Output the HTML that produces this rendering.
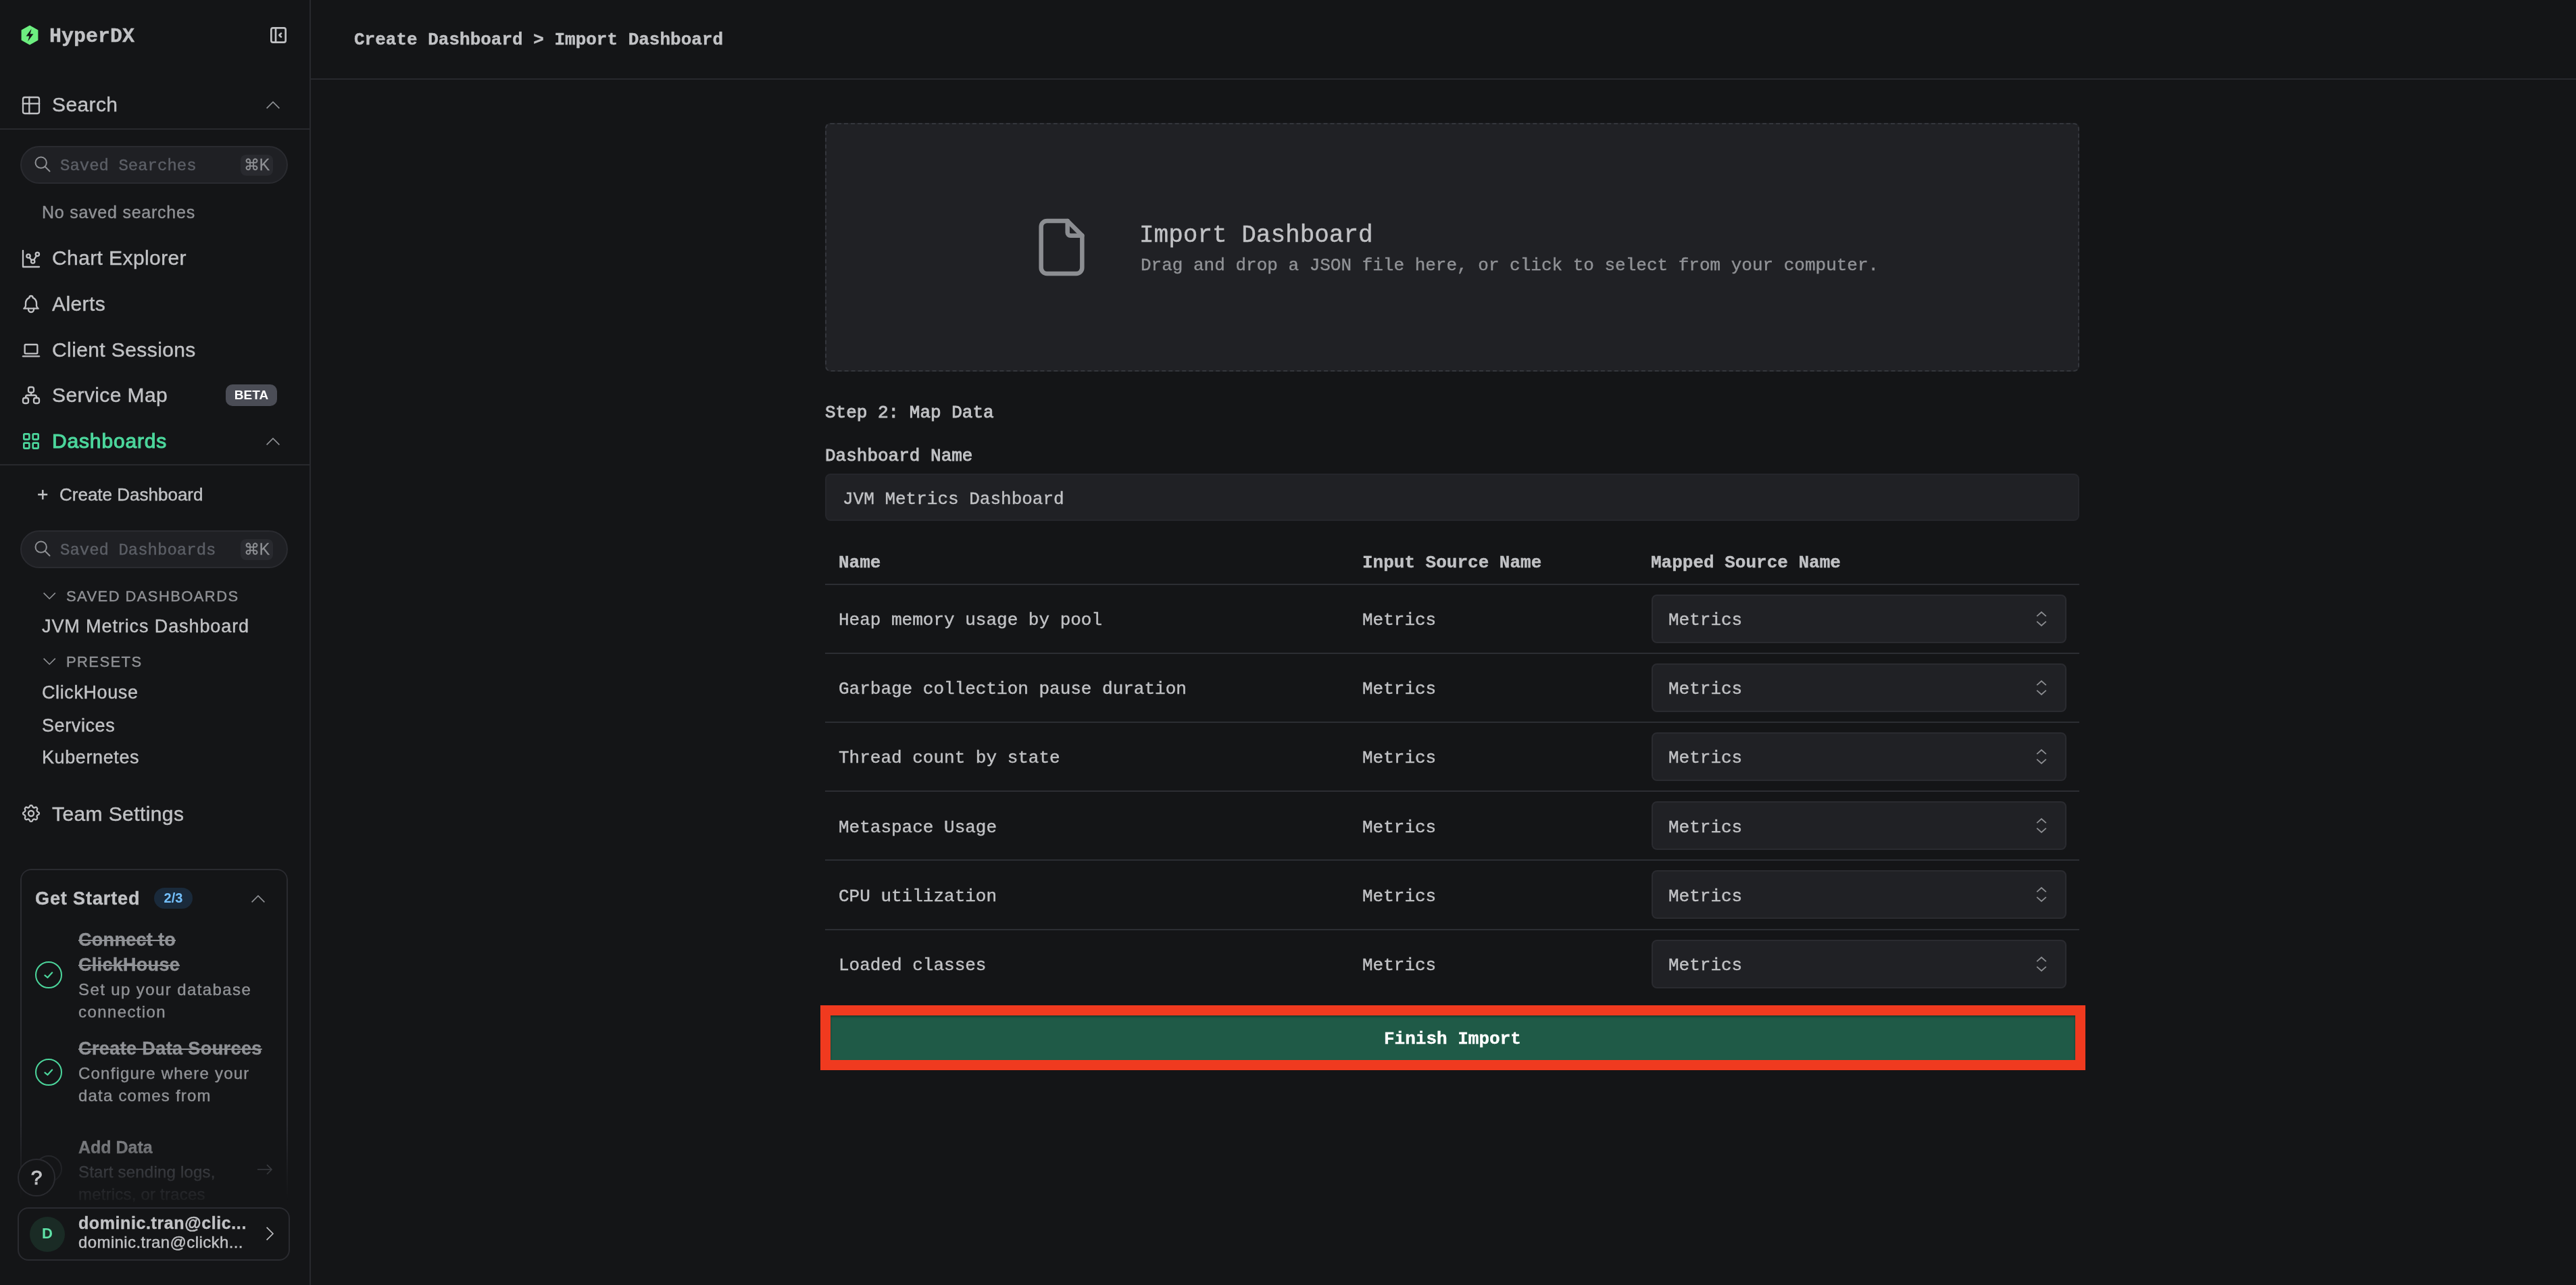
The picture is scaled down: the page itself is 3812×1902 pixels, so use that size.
<!DOCTYPE html>
<html><head><meta charset="utf-8">
<style>
html,body{margin:0;padding:0;background:#141517;overflow:hidden}
@media (max-width:2500px){body{zoom:1 !important}}
body{zoom:2;width:1906px;height:951px;position:relative;font-family:"Liberation Sans",sans-serif;color:#C1C2C5}
.a{position:absolute;will-change:transform}
.mono{font-family:"Liberation Mono",monospace}
.t{position:absolute;white-space:pre;line-height:1;will-change:transform;-webkit-text-stroke:0.2px currentColor}
svg{position:absolute;overflow:visible}
#sb{position:absolute;left:0;top:0;width:229px;height:951px;border-right:1px solid #28292d;background:#141517}
.hr{position:absolute;height:1px;background:#28292d}
.nav{font-size:15px;letter-spacing:0.2px;color:#C1C2C5}
.inp{position:absolute;left:15px;width:196px;height:26px;border:1px solid #2a2b30;border-radius:14px;background:#1f2024}
.kbd{position:absolute;left:162px;top:5.5px;width:24px;height:15.5px;border-radius:4px;background:#292a2f;color:#909296;font-size:11.5px;line-height:15.5px;text-align:center;will-change:transform;-webkit-text-stroke:0.15px currentColor}
.sel{position:absolute;left:1222px;width:304.75px;height:34px;border:1px solid #2a2b30;border-radius:4px;background:#202125}
</style></head>
<body>
<!-- SIDEBAR -->
<div id="sb"></div>
<!-- logo -->
<svg style="left:15px;top:18.5px" width="14" height="15" viewBox="0 0 14 15">
 <path d="M7 0.3 L13.2 3.8 V11.2 L7 14.7 L0.8 11.2 V3.8 Z" fill="#6DEF80"/>
 <path d="M8.3 2.9 L4.3 8.3 H6.7 L5.6 12.1 L9.7 6.6 H7.3 Z" fill="#141517"/>
</svg>
<div class="t mono" style="left:36.7px;top:19.6px;font-size:15px;font-weight:700;color:#C1C2C5">HyperDX</div>
<svg style="left:198px;top:18px" width="16" height="16" viewBox="0 0 24 24" fill="none" stroke="#C1C2C5" stroke-width="2" stroke-linecap="round" stroke-linejoin="round"><rect x="4" y="4" width="16" height="16" rx="2"/><path d="M9 4v16"/><path d="M15 10l-2 2l2 2"/></svg>

<!-- Search section -->
<svg style="left:15px;top:70px" width="16" height="16" viewBox="0 0 24 24" fill="none" stroke="#C1C2C5" stroke-width="1.75" stroke-linecap="round" stroke-linejoin="round"><path d="M3 5a2 2 0 0 1 2 -2h14a2 2 0 0 1 2 2v14a2 2 0 0 1 -2 2h-14a2 2 0 0 1 -2 -2v-14z"/><path d="M3 10h18"/><path d="M10 3v18"/></svg>
<div class="t nav" style="left:38.6px;top:70px">Search</div>
<svg style="left:197px;top:75px" width="10" height="5.5" viewBox="0 0 10 5.5" fill="none" stroke="#909296" stroke-width="0.8"><path d="M0.3 5.2 L5 0.5 L9.7 5.2"/></svg>
<div class="hr" style="left:0;top:95px;width:229px"></div>

<div class="inp" style="top:108px">
 <svg style="left:8.5px;top:5.5px" width="14" height="14" viewBox="0 0 24 24" fill="none" stroke="#909296" stroke-width="1.7" stroke-linecap="round"><circle cx="10" cy="10" r="7"/><path d="M21 21l-6 -6"/></svg>
 <div class="t mono" style="left:28.5px;top:8px;font-size:12px;color:#5C5F66">Saved Searches</div>
 <div class="kbd">⌘K</div>
</div>
<div class="t" style="left:31px;top:151px;font-size:12.5px;letter-spacing:0.38px;color:#909296">No saved searches</div>

<!-- nav items -->
<svg style="left:15px;top:183.5px" width="16" height="16" viewBox="0 0 24 24" fill="none" stroke="#C1C2C5" stroke-width="1.75" stroke-linecap="round" stroke-linejoin="round"><path d="M3 3v18h18"/><circle cx="9" cy="9" r="2"/><circle cx="19" cy="7" r="2"/><circle cx="14" cy="15" r="2"/><path d="M10.16 10.62l2.34 2.88"/><path d="M15.088 13.328l2.837 -4.586"/></svg>
<div class="t nav" style="left:38.6px;top:183.5px">Chart Explorer</div>

<svg style="left:15px;top:217px" width="16" height="16" viewBox="0 0 24 24" fill="none" stroke="#C1C2C5" stroke-width="1.75" stroke-linecap="round" stroke-linejoin="round"><path d="M10 5a2 2 0 1 1 4 0a7 7 0 0 1 4 6v3a4 4 0 0 0 2 3h-16a4 4 0 0 0 2 -3v-3a7 7 0 0 1 4 -6"/><path d="M9 17v1a3 3 0 0 0 6 0v-1"/></svg>
<div class="t nav" style="left:38.6px;top:217.5px">Alerts</div>

<svg style="left:15px;top:251px" width="16" height="16" viewBox="0 0 24 24" fill="none" stroke="#C1C2C5" stroke-width="1.75" stroke-linecap="round" stroke-linejoin="round"><path d="M3 19l18 0"/><path d="M5 6m0 1a1 1 0 0 1 1 -1h12a1 1 0 0 1 1 1v8a1 1 0 0 1 -1 1h-12a1 1 0 0 1 -1 -1z"/></svg>
<div class="t nav" style="left:38.6px;top:251.5px">Client Sessions</div>

<svg style="left:15px;top:284.5px" width="16" height="16" viewBox="0 0 24 24" fill="none" stroke="#C1C2C5" stroke-width="1.75" stroke-linecap="round" stroke-linejoin="round"><path d="M3 15m0 2a2 2 0 0 1 2 -2h2a2 2 0 0 1 2 2v2a2 2 0 0 1 -2 2h-2a2 2 0 0 1 -2 -2z"/><path d="M15 15m0 2a2 2 0 0 1 2 -2h2a2 2 0 0 1 2 2v2a2 2 0 0 1 -2 2h-2a2 2 0 0 1 -2 -2z"/><path d="M9 3m0 2a2 2 0 0 1 2 -2h2a2 2 0 0 1 2 2v2a2 2 0 0 1 -2 2h-2a2 2 0 0 1 -2 -2z"/><path d="M6 15v-1a2 2 0 0 1 2 -2h8a2 2 0 0 1 2 2v1"/><path d="M12 9l0 3"/></svg>
<div class="t nav" style="left:38.6px;top:285px">Service Map</div>
<div class="a" style="left:167px;top:284.5px;width:38px;height:16px;border-radius:5px;background:#4B4D56;color:#fff;font-size:9.5px;font-weight:700;line-height:16px;text-align:center">BETA</div>

<svg style="left:15px;top:318.5px" width="16" height="16" viewBox="0 0 24 24" fill="none" stroke="#4CD69C" stroke-width="2" stroke-linecap="round" stroke-linejoin="round"><path d="M4 4m0 1a1 1 0 0 1 1 -1h4a1 1 0 0 1 1 1v4a1 1 0 0 1 -1 1h-4a1 1 0 0 1 -1 -1z"/><path d="M14 4m0 1a1 1 0 0 1 1 -1h4a1 1 0 0 1 1 1v4a1 1 0 0 1 -1 1h-4a1 1 0 0 1 -1 -1z"/><path d="M4 14m0 1a1 1 0 0 1 1 -1h4a1 1 0 0 1 1 1v4a1 1 0 0 1 -1 1h-4a1 1 0 0 1 -1 -1z"/><path d="M14 14m0 1a1 1 0 0 1 1 -1h4a1 1 0 0 1 1 1v4a1 1 0 0 1 -1 1h-4a1 1 0 0 1 -1 -1z"/></svg>
<div class="t nav" style="left:38.6px;top:319px;color:#4CD69C;font-weight:400;letter-spacing:0.42px;-webkit-text-stroke:0.55px currentColor">Dashboards</div>
<svg style="left:197px;top:324px" width="10" height="5.5" viewBox="0 0 10 5.5" fill="none" stroke="#909296" stroke-width="0.8"><path d="M0.3 5.2 L5 0.5 L9.7 5.2"/></svg>
<div class="hr" style="left:0;top:343.5px;width:229px"></div>

<div class="t" style="left:27.5px;top:359px;font-size:14px;color:#C1C2C5">+</div>
<div class="t" style="left:44px;top:359.5px;font-size:13px;color:#C1C2C5">Create Dashboard</div>

<div class="inp" style="top:392.5px">
 <svg style="left:8.5px;top:5.5px" width="14" height="14" viewBox="0 0 24 24" fill="none" stroke="#909296" stroke-width="1.7" stroke-linecap="round"><circle cx="10" cy="10" r="7"/><path d="M21 21l-6 -6"/></svg>
 <div class="t mono" style="left:28.5px;top:8px;font-size:12px;color:#5C5F66">Saved Dashboards</div>
 <div class="kbd">⌘K</div>
</div>

<svg style="left:31.8px;top:438.4px" width="9.2" height="5" viewBox="0 0 9.2 5" fill="none" stroke="#909296" stroke-width="0.8"><path d="M0.3 0.3 L4.6 4.6 L8.9 0.3"/></svg>
<div class="t" style="left:49px;top:436px;font-size:11px;letter-spacing:0.7px;color:#909296">SAVED DASHBOARDS</div>
<div class="t" style="left:31px;top:457px;font-size:13.5px;letter-spacing:0.45px;color:#C1C2C5">JVM Metrics Dashboard</div>
<svg style="left:31.8px;top:487px" width="9.2" height="5" viewBox="0 0 9.2 5" fill="none" stroke="#909296" stroke-width="0.8"><path d="M0.3 0.3 L4.6 4.6 L8.9 0.3"/></svg>
<div class="t" style="left:49px;top:484.5px;font-size:11px;letter-spacing:0.7px;color:#909296">PRESETS</div>
<div class="t" style="left:31px;top:506px;font-size:13.5px;letter-spacing:0.3px;color:#C1C2C5">ClickHouse</div>
<div class="t" style="left:31px;top:530.5px;font-size:13.5px;letter-spacing:0.3px;color:#C1C2C5">Services</div>
<div class="t" style="left:31px;top:554px;font-size:13.5px;letter-spacing:0.3px;color:#C1C2C5">Kubernetes</div>

<svg style="left:15px;top:594px" width="16" height="16" viewBox="0 0 24 24" fill="none" stroke="#C1C2C5" stroke-width="1.75" stroke-linecap="round" stroke-linejoin="round"><path d="M10.325 4.317c.426 -1.756 2.924 -1.756 3.35 0a1.724 1.724 0 0 0 2.573 1.066c1.543 -.94 3.31 .826 2.37 2.37a1.724 1.724 0 0 0 1.065 2.572c1.756 .426 1.756 2.924 0 3.35a1.724 1.724 0 0 0 -1.066 2.573c.94 1.543 -.826 3.31 -2.37 2.37a1.724 1.724 0 0 0 -2.572 1.065c-.426 1.756 -2.924 1.756 -3.35 0a1.724 1.724 0 0 0 -2.573 -1.066c-1.543 .94 -3.31 -.826 -2.37 -2.37a1.724 1.724 0 0 0 -1.065 -2.572c-1.756 -.426 -1.756 -2.924 0 -3.35a1.724 1.724 0 0 0 1.066 -2.573c-.94 -1.543 .826 -3.31 2.37 -2.37c1 .608 2.296 .07 2.572 -1.065z"/><path d="M9 12a3 3 0 1 0 6 0a3 3 0 0 0 -6 0"/></svg>
<div class="t nav" style="left:38.6px;top:595px">Team Settings</div>

<!-- Get started card -->
<div id="gs" class="a" style="left:15px;top:643px;width:196px;height:260px;border:1px solid #2a2b30;border-radius:8px;
 -webkit-mask-image:linear-gradient(to bottom,#000 0,#000 190px,rgba(0,0,0,0) 245px)"></div>
<div id="gsc" class="a" style="left:0;top:0;width:229px;height:951px;-webkit-mask-image:linear-gradient(to bottom,#000 0,#000 835px,rgba(0,0,0,0.15) 888px,rgba(0,0,0,0) 892px)">
 <div class="t" style="left:26px;top:658.5px;font-size:13.5px;letter-spacing:0.45px;font-weight:700;color:#C1C2C5">Get Started</div>
 <div class="a" style="left:114px;top:657.2px;width:28.5px;height:15.7px;border-radius:8px;background:#1A2A3B;color:#74C0FC;font-size:10px;font-weight:700;line-height:15.7px;text-align:center">2/3</div>
 <svg style="left:186px;top:662.5px" width="10" height="5.5" viewBox="0 0 10 5.5" fill="none" stroke="#909296" stroke-width="0.8"><path d="M0.3 5.2 L5 0.5 L9.7 5.2"/></svg>

 <svg style="left:26px;top:711.5px" width="20" height="20" viewBox="0 0 20 20" fill="none" stroke="#4CD69C" stroke-width="1"><circle cx="10" cy="10" r="9.5"/><path d="M7.2 10.3 L9.2 12 L12.6 8.3" stroke-width="1.1" stroke-linecap="round" stroke-linejoin="round"/></svg>
 <div class="t" style="left:58px;top:686.3px;font-size:13.5px;letter-spacing:0.15px;font-weight:700;color:#909296;text-decoration:line-through;line-height:18.4px">Connect to<br>ClickHouse</div>
 <div class="t" style="left:58px;top:724.5px;font-size:12px;letter-spacing:0.7px;color:#909296;line-height:16.4px">Set up your database<br>connection</div>

 <svg style="left:26px;top:783.5px" width="20" height="20" viewBox="0 0 20 20" fill="none" stroke="#4CD69C" stroke-width="1"><circle cx="10" cy="10" r="9.5"/><path d="M7.2 10.3 L9.2 12 L12.6 8.3" stroke-width="1.1" stroke-linecap="round" stroke-linejoin="round"/></svg>
 <div class="t" style="left:58px;top:769.6px;font-size:13.5px;letter-spacing:0.2px;font-weight:700;color:#909296;text-decoration:line-through">Create Data Sources</div>
 <div class="t" style="left:58px;top:786.5px;font-size:12px;letter-spacing:0.6px;color:#909296;line-height:16.4px">Configure where your<br>data comes from</div>

 <svg style="left:26px;top:855px" width="20" height="20" viewBox="0 0 20 20" fill="none" stroke="#2e3035" stroke-width="1"><circle cx="10" cy="10" r="9.5"/></svg>
 <div class="t" style="left:58px;top:843px;font-size:12.5px;font-weight:700;color:#909296">Add Data</div>
 <div class="t" style="left:58px;top:859.5px;font-size:12px;letter-spacing:0.1px;color:#5C5F66;line-height:16.4px">Start sending logs,<br>metrics, or traces</div>
 <svg style="left:190px;top:860.6px" width="12" height="10" viewBox="0 0 12 10" fill="none" stroke="#5C5F66" stroke-width="0.8"><path d="M0.5 5 H11 M7.5 1.5 L11 5 L7.5 8.5"/></svg>
</div>

<div class="a" style="left:13.2px;top:857.5px;width:26px;height:26px;border:1px solid #2a2b30;border-radius:50%;background:#141517;color:#C1C2C5;font-size:15px;font-weight:400;line-height:26px;text-align:center;-webkit-text-stroke:0.5px currentColor">?</div>

<div class="a" style="left:13.2px;top:893.3px;width:199.6px;height:37.3px;border:1px solid #2a2b30;border-radius:8px"></div>
<div class="a" style="left:22px;top:900.4px;width:26px;height:26px;border-radius:50%;background:#1A2B25;color:#5FE3A8;font-size:11px;font-weight:700;line-height:24.5px;text-align:center">D</div>
<div class="t" style="left:58px;top:899px;font-size:12.5px;letter-spacing:0.3px;font-weight:700;color:#C1C2C5">dominic.tran@clic...</div>
<div class="t" style="left:58px;top:913.5px;font-size:12px;letter-spacing:0.2px;color:#C1C2C5">dominic.tran@clickh...</div>
<svg style="left:196.8px;top:908px" width="5.5" height="10" viewBox="0 0 5.5 10" fill="none" stroke="#C1C2C5" stroke-width="0.8"><path d="M0.3 0.3 L5 5 L0.3 9.7"/></svg>

<!-- MAIN -->
<div class="hr" style="left:230px;top:58px;width:1676px"></div>
<div class="t mono" style="left:262px;top:23.2px;font-size:13px;font-weight:700;color:#C1C2C5">Create Dashboard &gt; Import Dashboard</div>

<div class="a" style="left:610.5px;top:91px;width:926px;height:182px;border:1px dashed #34363c;border-radius:4px;background:#202125"></div>
<svg style="left:759.6px;top:156.9px" width="52" height="52" viewBox="0 0 24 24" fill="none" stroke="#8C8E92" stroke-width="1.5" stroke-linecap="round" stroke-linejoin="round"><path d="M14 3v4a1 1 0 0 0 1 1h4"/><path d="M17 21h-10a2 2 0 0 1 -2 -2v-14a2 2 0 0 1 2 -2h7l5 5v11a2 2 0 0 1 -2 2z"/></svg>
<div class="t mono" style="left:843.2px;top:165.7px;font-size:18px;color:#C1C2C5">Import Dashboard</div>
<div class="t mono" style="left:844px;top:190px;font-size:13px;color:#909296">Drag and drop a JSON file here, or click to select from your computer.</div>

<div class="t mono" style="left:610.5px;top:298.9px;font-size:13px;font-weight:400;-webkit-text-stroke:0.45px currentColor;color:#C1C2C5">Step 2: Map Data</div>
<div class="t mono" style="left:610.5px;top:330.75px;font-size:13px;font-weight:400;-webkit-text-stroke:0.45px currentColor;color:#C1C2C5">Dashboard Name</div>
<div class="a" style="left:610.5px;top:350.4px;width:926px;height:33px;border:1px solid #25262b;border-radius:4px;background:#202125"></div>
<div class="t mono" style="left:623.5px;top:362.75px;font-size:13px;color:#C1C2C5">JVM Metrics Dashboard</div>

<!-- table -->
<div class="t mono" style="left:620.5px;top:409.9px;font-size:13px;font-weight:700;color:#C1C2C5">Name</div>
<div class="t mono" style="left:1008px;top:409.9px;font-size:13px;font-weight:700;color:#C1C2C5">Input Source Name</div>
<div class="t mono" style="left:1221.5px;top:409.9px;font-size:13px;font-weight:700;color:#C1C2C5">Mapped Source Name</div>
<div class="hr" style="left:610.5px;top:432px;width:928px;background:#2c2e33"></div>
<div class="hr" style="left:610.5px;top:483.05px;width:928px;background:#2c2e33"></div>
<div class="t mono" style="left:620.5px;top:452.60px;font-size:13px;color:#C1C2C5">Heap memory usage by pool</div>
<div class="t mono" style="left:1008px;top:452.60px;font-size:13px;color:#C1C2C5">Metrics</div>
<div class="sel" style="top:440.00px"></div>
<div class="t mono" style="left:1234.5px;top:452.60px;font-size:13px;color:#C1C2C5">Metrics</div>
<svg style="left:1506.5px;top:452.50px" width="8" height="11" viewBox="0 0 8 11" fill="none" stroke="#8C8E92" stroke-width="0.9"><path d="M0.6 3.6 L4 0.5 L7.4 3.6 M0.6 7.4 L4 10.5 L7.4 7.4"/></svg>
<div class="hr" style="left:610.5px;top:534.10px;width:928px;background:#2c2e33"></div>
<div class="t mono" style="left:620.5px;top:503.65px;font-size:13px;color:#C1C2C5">Garbage collection pause duration</div>
<div class="t mono" style="left:1008px;top:503.65px;font-size:13px;color:#C1C2C5">Metrics</div>
<div class="sel" style="top:491.05px"></div>
<div class="t mono" style="left:1234.5px;top:503.65px;font-size:13px;color:#C1C2C5">Metrics</div>
<svg style="left:1506.5px;top:503.55px" width="8" height="11" viewBox="0 0 8 11" fill="none" stroke="#8C8E92" stroke-width="0.9"><path d="M0.6 3.6 L4 0.5 L7.4 3.6 M0.6 7.4 L4 10.5 L7.4 7.4"/></svg>
<div class="hr" style="left:610.5px;top:585.15px;width:928px;background:#2c2e33"></div>
<div class="t mono" style="left:620.5px;top:554.70px;font-size:13px;color:#C1C2C5">Thread count by state</div>
<div class="t mono" style="left:1008px;top:554.70px;font-size:13px;color:#C1C2C5">Metrics</div>
<div class="sel" style="top:542.10px"></div>
<div class="t mono" style="left:1234.5px;top:554.70px;font-size:13px;color:#C1C2C5">Metrics</div>
<svg style="left:1506.5px;top:554.60px" width="8" height="11" viewBox="0 0 8 11" fill="none" stroke="#8C8E92" stroke-width="0.9"><path d="M0.6 3.6 L4 0.5 L7.4 3.6 M0.6 7.4 L4 10.5 L7.4 7.4"/></svg>
<div class="hr" style="left:610.5px;top:636.20px;width:928px;background:#2c2e33"></div>
<div class="t mono" style="left:620.5px;top:605.75px;font-size:13px;color:#C1C2C5">Metaspace Usage</div>
<div class="t mono" style="left:1008px;top:605.75px;font-size:13px;color:#C1C2C5">Metrics</div>
<div class="sel" style="top:593.15px"></div>
<div class="t mono" style="left:1234.5px;top:605.75px;font-size:13px;color:#C1C2C5">Metrics</div>
<svg style="left:1506.5px;top:605.65px" width="8" height="11" viewBox="0 0 8 11" fill="none" stroke="#8C8E92" stroke-width="0.9"><path d="M0.6 3.6 L4 0.5 L7.4 3.6 M0.6 7.4 L4 10.5 L7.4 7.4"/></svg>
<div class="hr" style="left:610.5px;top:687.25px;width:928px;background:#2c2e33"></div>
<div class="t mono" style="left:620.5px;top:656.80px;font-size:13px;color:#C1C2C5">CPU utilization</div>
<div class="t mono" style="left:1008px;top:656.80px;font-size:13px;color:#C1C2C5">Metrics</div>
<div class="sel" style="top:644.20px"></div>
<div class="t mono" style="left:1234.5px;top:656.80px;font-size:13px;color:#C1C2C5">Metrics</div>
<svg style="left:1506.5px;top:656.70px" width="8" height="11" viewBox="0 0 8 11" fill="none" stroke="#8C8E92" stroke-width="0.9"><path d="M0.6 3.6 L4 0.5 L7.4 3.6 M0.6 7.4 L4 10.5 L7.4 7.4"/></svg>
<div class="t mono" style="left:620.5px;top:707.85px;font-size:13px;color:#C1C2C5">Loaded classes</div>
<div class="t mono" style="left:1008px;top:707.85px;font-size:13px;color:#C1C2C5">Metrics</div>
<div class="sel" style="top:695.25px"></div>
<div class="t mono" style="left:1234.5px;top:707.85px;font-size:13px;color:#C1C2C5">Metrics</div>
<svg style="left:1506.5px;top:707.75px" width="8" height="11" viewBox="0 0 8 11" fill="none" stroke="#8C8E92" stroke-width="0.9"><path d="M0.6 3.6 L4 0.5 L7.4 3.6 M0.6 7.4 L4 10.5 L7.4 7.4"/></svg>


<!-- finish import -->
<div class="a" style="left:607px;top:744px;width:921px;height:33px;border:7.5px solid #F03A1F;background:#1F5A47;box-shadow:inset 0 1px 1.5px rgba(0,0,0,0.35)"></div>
<div class="t mono" style="left:1024px;top:762.55px;font-size:13px;font-weight:700;color:#ffffff">Finish Import</div>


</body></html>
